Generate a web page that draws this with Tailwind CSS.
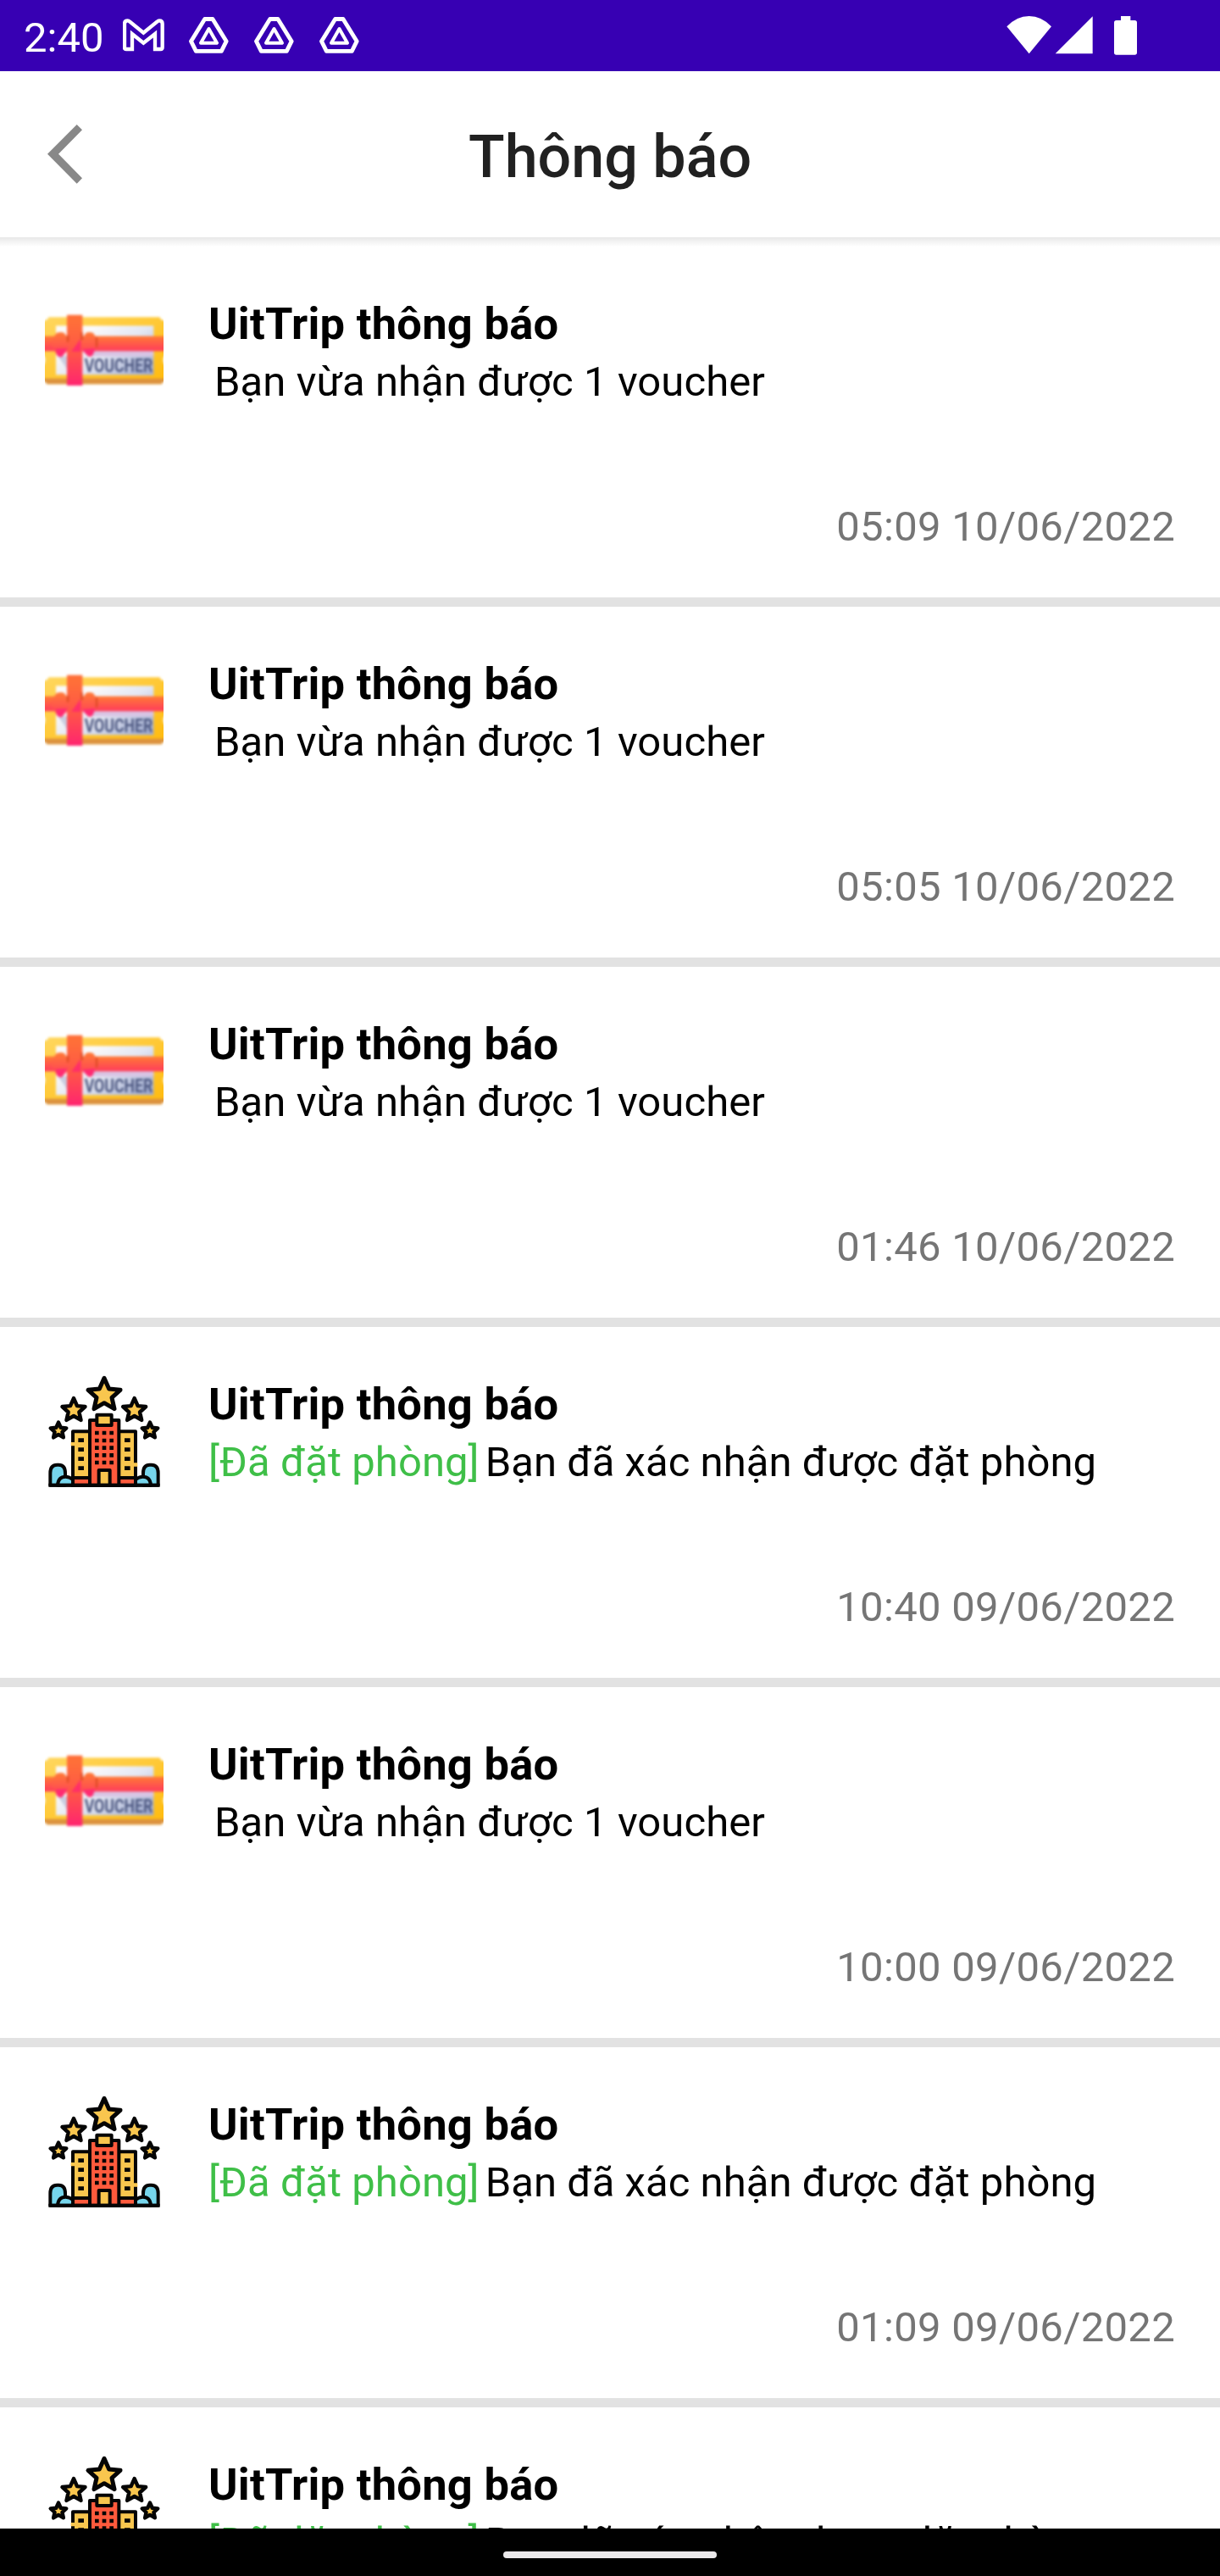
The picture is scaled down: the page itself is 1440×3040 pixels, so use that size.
<!DOCTYPE html>
<html lang="vi">
<head>
<meta charset="utf-8">
<title>Thông báo</title>
<script src="https://cdn.jsdelivr.net/npm/@tailwindcss/browser@4"></script>
</head>
<body class="bg-white">
<svg class="absolute size-0">
  <defs>
    <linearGradient id="gold" x1="0" y1="0" x2="1" y2="1"><stop offset="0" stop-color="#ffd75f"/><stop offset="1" stop-color="#ffba0c"/></linearGradient>
    <linearGradient id="paper" x1="0" y1="0.1" x2="1" y2="0.9"><stop offset="0.2" stop-color="#fbfafa"/><stop offset="0.55" stop-color="#e3e7f3"/><stop offset="1" stop-color="#9fabd0"/></linearGradient>
    <linearGradient id="band" x1="0" y1="0" x2="0" y2="1"><stop offset="0" stop-color="#ff7a35"/><stop offset="1" stop-color="#ff3b5c"/></linearGradient>
    <linearGradient id="strap" x1="0" y1="0" x2="0" y2="1"><stop offset="0.1" stop-color="#ff6f38"/><stop offset="0.55" stop-color="#ff5348"/><stop offset="1" stop-color="#ff2470"/></linearGradient>
    <filter id="soft" x="-5%" y="-10%" width="110%" height="120%" color-interpolation-filters="sRGB"><feGaussianBlur stdDeviation="4.2"/></filter>
    <path id="star" d="M0-60L17-22L57-18L27 9L36 49L0 28L-36 49L-27 9L-57-18L-17-22Z"/>
  </defs>
  <symbol id="voucher" viewBox="9 -63 420 420">
    <g filter="url(#soft)">
      <path d="M22 28H416Q417 40 440 42V158A26 26 0 0 0 440 202V254Q424 255 422 265H16Q14 255 -2 254V202A26 26 0 0 0 -2 158V42Q20 40 22 28Z" fill="url(#gold)"/>
      <path d="M-2 245H440V254Q424 255 422 265H16Q14 255 -2 254Z" fill="#dc923e"/>
      <rect x="48" y="58" width="346" height="174" fill="url(#paper)"/>
      <path d="M55 165H88V212Z" fill="#c9cde0"/>
      <path d="M143 148H394V166H160Z" fill="#d9c4e4"/>
      <text x="149" y="221" font-family="Roboto, sans-serif" font-weight="700" font-size="68" textLength="242" lengthAdjust="spacingAndGlyphs" fill="#4c5780">VOUCHER</text>
      <rect x="-4" y="95" width="446" height="53" fill="url(#band)"/>
      <rect x="87" y="20" width="55" height="250" fill="url(#strap)"/>
      <path d="M50 84Q64 78 78 84L96 112V138L72 165Q60 172 51 160L34 130V108Z" fill="url(#band)"/>
      <path d="M154 84Q166 78 180 84L196 108L190 134L178 162Q168 172 158 162L136 138V112Z" fill="url(#band)"/>
      <path d="M46 140L88 138L70 167Q60 172 51 162ZM140 142L188 138L178 162Q168 172 158 162Z" fill="#ff2a72"/>
      <path d="M102 150L136 104V150Z" fill="#ff2f68"/>
      <path d="M90 92V116M140 82V108M192 100V134" stroke="#dd4a24" stroke-width="7" fill="none"/>
    </g>
  </symbol>
  <symbol id="hotel" viewBox="69 57 420 420">
    <g fill="#f9c64e" stroke="#050505" stroke-linejoin="round">
      <use href="#star" transform="translate(279 139)" stroke-width="15"/>
      <use href="#star" transform="translate(171 193) scale(.71)" stroke-width="19"/>
      <use href="#star" transform="translate(386 193) scale(.71)" stroke-width="19"/>
      <use href="#star" transform="translate(117 265) scale(.49)" stroke-width="27"/>
      <use href="#star" transform="translate(441 265) scale(.49)" stroke-width="27"/>
    </g>
    <g fill="#76d5ec" stroke="#050505" stroke-width="12" stroke-linejoin="round">
      <path d="M88 458V415Q88 386 112 386H118Q141 386 141 415V458ZM470 458V415Q470 386 446 386H440Q417 386 417 415V458Z"/>
      <path d="M114 458Q116 428 142 428Q156 428 168 438V458ZM444 458Q442 428 416 428Q402 428 390 438V458Z"/>
    </g>
    <path d="M168 268H390V458H168Z" fill="#f9c64e" stroke="#050505" stroke-width="12" stroke-linejoin="round"/>
    <path d="M168 432H390V458H168Z" fill="#ff5a3c" stroke="#050505" stroke-width="12"/>
    <path d="M161 306H175V319H161ZM383 379H397V392H383Z" fill="#f9c64e"/>
    <path d="M228 228H331V458H228Z" fill="#ff5a3c" stroke="#050505" stroke-width="12" stroke-linejoin="round"/>
    <path d="M253 209H305V246H253ZM260 405H299V458H260Z" fill="#f9c64e" stroke="#050505" stroke-width="12" stroke-linejoin="round"/>
    <path d="M82 458H476" stroke="#050505" stroke-width="12"/>
    <path d="M246 273H312M246 300H312M246 326H312M246 352H312M246 378H312" stroke="#050505" stroke-width="14" stroke-dasharray="14 12"/>
    <path d="M187 299H207M187 332H207M187 365H207M187 398H207M351 299H371M351 332H371M351 365H371M351 398H371" stroke="#050505" stroke-width="14"/>
  </symbol>
  <symbol id="drive" viewBox="669 0 141 252">
    <g fill="none" stroke="#fff" stroke-linejoin="round">
      <path d="M725 67.500H753L801.500 146L784 181H694L676.500 146Z" stroke-width="14.500"/>
      <path d="M739.500 102L768 152H711Z" stroke-width="12"/>
    </g>
  </symbol>
</svg>

<div class="flex h-[3040px] w-[1440px] flex-col overflow-hidden bg-white font-['Roboto',sans-serif] text-[49px] leading-[57px] text-black">
  <div class="flex h-[84px] shrink-0 bg-[#3700b3] pr-[98px] pl-7 text-white">
    <div class="mt-4 w-[117px]">2:40</div>
    <svg class="h-[84px] w-[49px]" viewBox="435 0 147 252"><path d="M441 174V84Q441 73 452 73Q456 73 460 77L508 116L556 77Q560 73 564 73Q575 73 575 84V168Q575 174 569 174H549V120L508 152L468 120V174H447Q441 174 441 168Z" fill="none" stroke="#fff" stroke-width="13"/></svg>
    <div class="ml-[29px] flex gap-[30px]">
      <svg class="h-[84px] w-[47px]"><use href="#drive"/></svg>
      <svg class="h-[84px] w-[47px]"><use href="#drive"/></svg>
      <svg class="h-[84px] w-[47px]"><use href="#drive"/></svg>
    </div>
    <svg class="ml-auto h-[84px] w-[53px]" viewBox="144 0 159 252"><path d="M145 94Q180 57 224 57T303 94L224 190Z" fill="#fff"/></svg>
    <svg class="ml-1 h-[84px] w-[46px]" viewBox="315 0 138 252"><path d="M317 190L449 58V190Z" fill="#fff"/></svg>
    <svg class="ml-6 h-[84px] w-[27px]" viewBox="525 0 81 252"><path d="M549 57H583V72H598Q606 72 606 80V186Q606 194 598 194H533Q525 194 525 186V80Q525 72 533 72H549Z" fill="#fff"/></svg>
  </div>

  <header class="grid h-[196px] shrink-0 grid-cols-[553px_1fr]">
    <svg class="mt-[60px] ml-[52px] h-[80px] w-[50px]" viewBox="52 144 50 80"><path d="M90.700 147L97 153.300L69 181.700L97 210.300L90.700 216.700L56 181.700Z" fill="#888"/></svg>
    <h1 class="mt-[60px] text-[70px] leading-[82px] font-medium text-[#212121]">Thông báo</h1>
  </header>
  <div class="h-[11px] shrink-0 bg-linear-to-b from-[#e8e8e8] to-white"></div>

  <main class="min-h-0 flex-1 overflow-hidden">
    <article class="flex h-[425px] border-b-[11px] border-[#e2e2e2] pr-[53px] pl-[53px]">
      <svg class="mt-[53px] size-[140px] shrink-0"><use href="#voucher"/></svg>
      <div class="ml-[53px] flex flex-1 flex-col pt-[60px]">
        <h2 class="text-[52.5px] leading-[62px] font-bold tracking-[0.24px]">UitTrip thông báo</h2>
        <p class="mt-[9px] pl-[7px] tracking-[0.08px]">Bạn vừa nhận được 1 voucher</p>
        <time class="mt-[114px] self-end tracking-[0.3px] text-[#757575]">05:09 10/06/2022</time>
      </div>
    </article>
    <article class="flex h-[425px] border-b-[11px] border-[#e2e2e2] pr-[53px] pl-[53px]">
      <svg class="mt-[53px] size-[140px] shrink-0"><use href="#voucher"/></svg>
      <div class="ml-[53px] flex flex-1 flex-col pt-[60px]">
        <h2 class="text-[52.5px] leading-[62px] font-bold tracking-[0.24px]">UitTrip thông báo</h2>
        <p class="mt-[9px] pl-[7px] tracking-[0.08px]">Bạn vừa nhận được 1 voucher</p>
        <time class="mt-[114px] self-end tracking-[0.3px] text-[#757575]">05:05 10/06/2022</time>
      </div>
    </article>
    <article class="flex h-[425px] border-b-[11px] border-[#e2e2e2] pr-[53px] pl-[53px]">
      <svg class="mt-[53px] size-[140px] shrink-0"><use href="#voucher"/></svg>
      <div class="ml-[53px] flex flex-1 flex-col pt-[60px]">
        <h2 class="text-[52.5px] leading-[62px] font-bold tracking-[0.24px]">UitTrip thông báo</h2>
        <p class="mt-[9px] pl-[7px] tracking-[0.08px]">Bạn vừa nhận được 1 voucher</p>
        <time class="mt-[114px] self-end tracking-[0.3px] text-[#757575]">01:46 10/06/2022</time>
      </div>
    </article>
    <article class="flex h-[425px] border-b-[11px] border-[#e2e2e2] pr-[53px] pl-[53px]">
      <svg class="mt-[53px] size-[140px] shrink-0"><use href="#hotel"/></svg>
      <div class="ml-[53px] flex flex-1 flex-col pt-[60px]">
        <h2 class="text-[52.5px] leading-[62px] font-bold tracking-[0.24px]">UitTrip thông báo</h2>
        <p class="mt-[9px] flex gap-[7px] tracking-[0.06px]"><span class="text-[#3fbf48]">[Đã đặt phòng]</span><span>Bạn đã xác nhận được đặt phòng</span></p>
        <time class="mt-[114px] self-end tracking-[0.3px] text-[#757575]">10:40 09/06/2022</time>
      </div>
    </article>
    <article class="flex h-[425px] border-b-[11px] border-[#e2e2e2] pr-[53px] pl-[53px]">
      <svg class="mt-[53px] size-[140px] shrink-0"><use href="#voucher"/></svg>
      <div class="ml-[53px] flex flex-1 flex-col pt-[60px]">
        <h2 class="text-[52.5px] leading-[62px] font-bold tracking-[0.24px]">UitTrip thông báo</h2>
        <p class="mt-[9px] pl-[7px] tracking-[0.08px]">Bạn vừa nhận được 1 voucher</p>
        <time class="mt-[114px] self-end tracking-[0.3px] text-[#757575]">10:00 09/06/2022</time>
      </div>
    </article>
    <article class="flex h-[425px] border-b-[11px] border-[#e2e2e2] pr-[53px] pl-[53px]">
      <svg class="mt-[53px] size-[140px] shrink-0"><use href="#hotel"/></svg>
      <div class="ml-[53px] flex flex-1 flex-col pt-[60px]">
        <h2 class="text-[52.5px] leading-[62px] font-bold tracking-[0.24px]">UitTrip thông báo</h2>
        <p class="mt-[9px] flex gap-[7px] tracking-[0.06px]"><span class="text-[#3fbf48]">[Đã đặt phòng]</span><span>Bạn đã xác nhận được đặt phòng</span></p>
        <time class="mt-[114px] self-end tracking-[0.3px] text-[#757575]">01:09 09/06/2022</time>
      </div>
    </article>
    <article class="flex h-[425px] pr-[53px] pl-[53px]">
      <svg class="mt-[53px] size-[140px] shrink-0"><use href="#hotel"/></svg>
      <div class="ml-[53px] flex flex-1 flex-col pt-[60px]">
        <h2 class="text-[52.5px] leading-[62px] font-bold tracking-[0.24px]">UitTrip thông báo</h2>
        <p class="mt-[9px] flex gap-[7px] tracking-[0.06px]"><span class="text-[#3fbf48]">[Đã đặt phòng]</span><span>Bạn đã xác nhận được đặt phòng</span></p>
      </div>
    </article>
  </main>

  <footer class="flex h-14 shrink-0 justify-center bg-black pt-[27px]">
    <div class="h-2 w-[252px] rounded-full bg-[#ebe9eb]"></div>
  </footer>
</div>
</body>
</html>
